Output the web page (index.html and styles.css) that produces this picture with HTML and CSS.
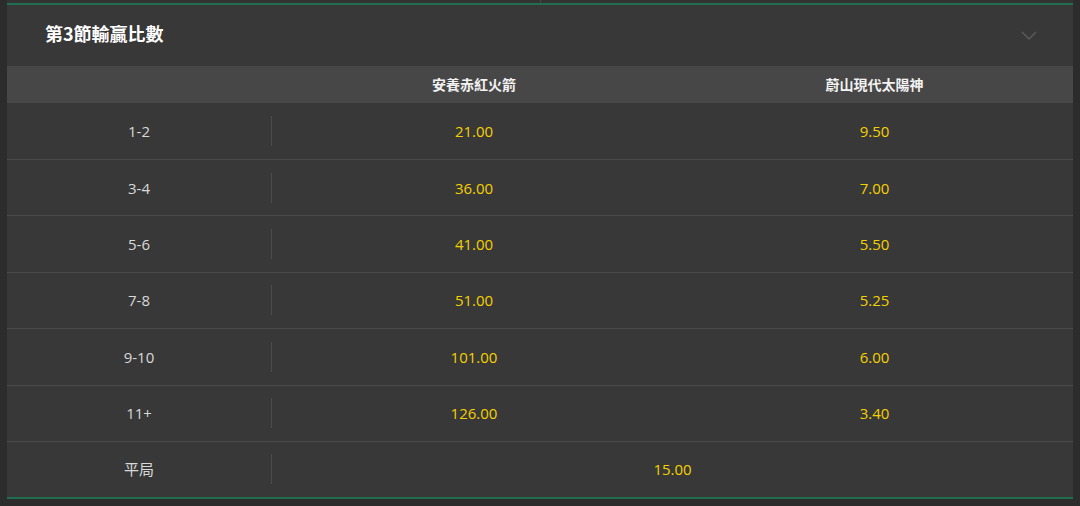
FILE: index.html
```html
<!DOCTYPE html>
<html lang="zh-Hant">
<head>
<meta charset="utf-8">
<link rel="stylesheet" href="styles.css">
</head>
<body>
<div class="page">
  <div class="topstrip"><div class="topstrip-half"></div><div class="topstrip-half"></div></div>
  <section class="market">
    <div class="market-head">
      <h2 class="market-title">第3節輸贏比數</h2>
      <svg class="chevron" width="16" height="10" viewBox="0 0 16 10"><path d="M1 1 L8 8 L15 1" fill="none" stroke="#5a5a5a" stroke-width="1.5"/></svg>
    </div>
    <div class="col-head">
      <div class="cell label"></div>
      <div class="cell">安養赤紅火箭</div>
      <div class="cell">蔚山現代太陽神</div>
    </div>
    <div class="row"><div class="cell label">1-2</div><div class="cell odds">21.00</div><div class="cell odds">9.50</div></div>
    <div class="row"><div class="cell label">3-4</div><div class="cell odds">36.00</div><div class="cell odds">7.00</div></div>
    <div class="row"><div class="cell label">5-6</div><div class="cell odds">41.00</div><div class="cell odds">5.50</div></div>
    <div class="row"><div class="cell label">7-8</div><div class="cell odds">51.00</div><div class="cell odds">5.25</div></div>
    <div class="row"><div class="cell label">9-10</div><div class="cell odds">101.00</div><div class="cell odds">6.00</div></div>
    <div class="row"><div class="cell label">11+</div><div class="cell odds">126.00</div><div class="cell odds">3.40</div></div>
    <div class="row draw"><div class="cell label">平局</div><div class="cell odds wide">15.00</div></div>
  </section>
</div>
</body>
</html>
```

FILE: styles.css
```css
* { box-sizing: border-box; margin: 0; padding: 0; }
html, body { height: 100%; }
body {
  background: #2c2c2c;
  font-family: "Open Sans", "Noto Sans CJK TC", sans-serif;
  color: #fff;
  overflow: hidden;
}
.page {
  width: 1080px;
  height: 506px;
  padding: 0 7px;
}
.topstrip {
  height: 3px;
  display: flex;
  background: #333;
}
.topstrip-half { flex: 1; }
.topstrip-half + .topstrip-half { border-left: 1px solid #4a4a4a; }
.market {
  background: #383838;
  border-top: 2px solid #1f6e52;
  border-bottom: 2px solid #1f6e52;
  width: 1066px;
}
.market-head {
  height: 61px;
  display: flex;
  align-items: center;
  justify-content: space-between;
  padding: 0 36px 6px 38px;
}
.market-title {
  font-size: 18px;
  font-weight: 700;
  color: #fff;
  font-family: "Noto Sans CJK TC", sans-serif;
}
.chevron { margin-top: 6px; }
.col-head {
  height: 37px;
  background: #474747;
  display: grid;
  grid-template-columns: 265px 404px 1fr;
  align-items: center;
  font-size: 14px;
  font-weight: 700;
  font-family: "Noto Sans CJK TC", sans-serif;
  color: #f2f2f2;
}
.col-head .cell { margin-top: -1px; }
.cell { text-align: center; }
.row {
  height: 56.4px;
  display: grid;
  grid-template-columns: 265px 404px 1fr;
  align-items: center;
  border-top: 1px solid #4a4a4a;
  font-size: 15px;
}
.col-head + .row { border-top: none; height: 56px; }
.row .label {
  color: #d8d8d8;
  height: 30px;
  line-height: 30px;
  border-right: 1px solid #4c4c4c;
}
.row .odds { color: #f5d000; }
.row.draw { height: 56px; }
.row.draw .wide { grid-column: 2 / 4; }
```
